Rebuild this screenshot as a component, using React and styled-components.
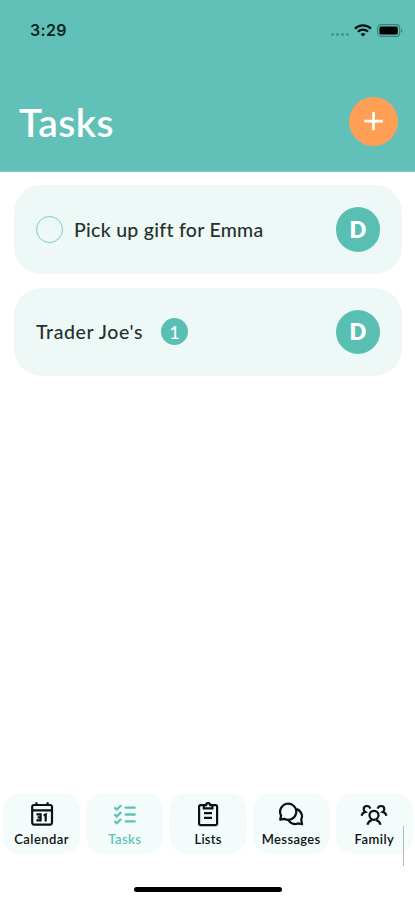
import styled, { createGlobalStyle } from "styled-components";

const tasks = [
  { id: 1, title: "Pick up gift for Emma", owner: "D", checkable: true },
  { id: 2, title: "Trader Joe's", owner: "D", count: 1 },
];

const CalendarIcon = () => (
  <svg width="26" height="26" viewBox="0 0 26 26" fill="none" stroke="currentColor" strokeWidth="2.2">
    <rect x="3.2" y="4" width="19.8" height="19.6" rx="2" />
    <path d="M3.2 9.4h19.8M7.4 1.2V5M18.6 1.2V5" />
    <path d="M7.4 13.4h4.2v6H7.4M8.6 16.4h3M14.6 14.4l2.1-1v7" />
  </svg>
);

const TasksIcon = () => (
  <svg width="26" height="26" viewBox="0 0 26 26" fill="none" stroke="currentColor" strokeWidth="2.3">
    <path d="M2.4 6.4l2.4 2.1 4.4-4.3M2.4 13.3l2.4 2.1 4.4-4.3M2.4 20.2l2.4 2.1 4.4-4.3" />
    <path d="M12.8 6.6h10.8M12.8 13.5h10.8M12.8 20.4h10.8" />
  </svg>
);

const ListsIcon = () => (
  <svg width="26" height="26" viewBox="0 0 26 26" fill="none" stroke="currentColor" strokeWidth="2.2">
    <path d="M8.5 4.2H5.6a1.5 1.5 0 0 0-1.5 1.5v17a1.5 1.5 0 0 0 1.5 1.5h15a1.5 1.5 0 0 0 1.5-1.5v-17a1.5 1.5 0 0 0-1.5-1.5h-2.9" />
    <path d="M8.8 4.2h2.3a2 2 0 0 1 4 0h2.3v3.2H8.8z" />
    <path d="M9 12.2h8M9 16.8h8" />
  </svg>
);

const MessagesIcon = () => (
  <svg width="26" height="26" viewBox="0 0 26 26" fill="none" stroke="currentColor" strokeWidth="2.2" strokeLinejoin="round">
    <path d="M2.2 18.6l.9-4A8.1 8.1 0 1 1 6.3 17.8z" />
    <path d="M18.2 8.2a7.3 7.3 0 0 1 5 10.4l.9 4.6-4.3-.8a7.3 7.3 0 0 1-9.6-3.8" />
  </svg>
);

const FamilyIcon = () => (
  <svg width="28" height="26" viewBox="0 0 28 26" fill="none" stroke="currentColor" strokeWidth="2.2">
    <circle cx="14" cy="14.3" r="4.5" />
    <path d="M7.4 23.8c.8-2.7 2.4-4.2 4.5-4.7M20.6 23.8c-.8-2.7-2.4-4.2-4.5-4.7" />
    <path d="M10.4 7.6C9.8 5.8 8.4 5 6.9 5 4.9 5 3.7 6.5 3.7 8.2c0 1.2.6 2.1 1.6 2.8-2 .4-3.3 1.7-3.7 3.7" />
    <path d="M17.6 7.6c.6-1.8 2-2.6 3.5-2.6 2 0 3.2 1.5 3.2 3.2 0 1.2-.6 2.1-1.6 2.8 2 .4 3.3 1.7 3.7 3.7" />
  </svg>
);

const tabs = [
  { label: "Calendar", icon: CalendarIcon, spacing: "0.45px" },
  { label: "Tasks", icon: TasksIcon, active: true, spacing: "0.4px" },
  { label: "Lists", icon: ListsIcon, spacing: "0.2px" },
  { label: "Messages", icon: MessagesIcon, spacing: "0.35px" },
  { label: "Family", icon: FamilyIcon, spacing: "0.5px" },
];

const App = () => {
  return (
    <Screen>
      <GlobalStyle />
      <Header>
        <StatusBar>
          <Time>3:29</Time>
          <StatusIcons>
            <Signal>
              <i />
              <i />
              <i />
              <i />
            </Signal>
            <svg width="18" height="13" viewBox="0 0 18 13" fill="none" stroke="#071513" strokeWidth="2.3">
              <path d="M1 4.6a11.4 11.4 0 0 1 16 0M4 7.8a7 7 0 0 1 10 0" />
              <path d="M9 12.6L6.6 10.2a3.5 3.5 0 0 1 4.8 0z" fill="#071513" stroke="none" />
            </svg>
            <svg width="26" height="13" viewBox="0 0 26 13">
              <rect x="0.6" y="0.6" width="22" height="11.8" rx="3.4" fill="none" stroke="#3c827b" strokeWidth="1.1" />
              <rect x="2.4" y="2.4" width="18.4" height="8.2" rx="1.5" fill="#000" />
              <path d="M24 4.4c1.8.5 1.8 3.7 0 4.2z" fill="#3c827b" />
            </svg>
          </StatusIcons>
        </StatusBar>
        <TitleRow>
          <Title>Tasks</Title>
          <AddButton aria-label="Add task">
            <svg width="20" height="20" viewBox="0 0 20 20" stroke="#fff" strokeWidth="2.6">
              <path d="M9.5 0.9v18.4M0.3 10.1h18.4" />
            </svg>
          </AddButton>
        </TitleRow>
      </Header>

      <TaskList>
        {tasks.map((task) => (
          <TaskCard key={task.id}>
            {task.checkable && <Checkbox />}
            <TaskName $spacing={task.checkable ? "0.28px" : "0.6px"}>{task.title}</TaskName>
            {task.count && <Count>{task.count}</Count>}
            <Avatar>{task.owner}</Avatar>
          </TaskCard>
        ))}
      </TaskList>

      <TabBar>
        {tabs.map(({ label, icon: Icon, active, spacing }) => (
          <Tab key={label} $active={active}>
            <Icon />
            <TabLabel $spacing={spacing}>{label}</TabLabel>
          </Tab>
        ))}
        <ScrollThumb />
      </TabBar>
      <HomeIndicator />
    </Screen>
  );
};

const GlobalStyle = createGlobalStyle`
  * {
    box-sizing: border-box;
  }
  body {
    margin: 0;
    background-color: white;
    font-family: Lato, sans-serif;
  }
`;

const Screen = styled.div`
  display: flex;
  flex-direction: column;
  width: 415px;
  height: 900px;
  overflow: hidden;
  background-color: white;
`;

const Header = styled.header`
  height: 172px;
  background-color: #61c1b8;
  border-bottom: 1px solid #82cec6;
`;

const StatusBar = styled.div`
  display: flex;
  align-items: center;
  justify-content: space-between;
  height: 60px;
  padding: 0 12px 0 30px;
`;

const Time = styled.span`
  font-family: Inter, sans-serif;
  font-size: 16px;
  font-weight: 600;
  letter-spacing: 0.3px;
  color: #0b2522;
`;

const StatusIcons = styled.div`
  display: flex;
  align-items: center;
  gap: 5px;
`;

const Signal = styled.div`
  display: flex;
  gap: 2px;
  padding-top: 8px;
  i {
    width: 3px;
    height: 3px;
    border-radius: 50%;
    background-color: #43928a;
  }
`;

const TitleRow = styled.div`
  display: flex;
  align-items: center;
  justify-content: space-between;
  height: 124px;
  margin-top: -1px;
  padding: 0 17px 0 19px;
`;

const Title = styled.h1`
  margin: 0;
  padding-top: 1px;
  font-size: 39px;
  font-weight: 600;
  line-height: 48px;
  letter-spacing: 0.4px;
  color: white;
`;

const AddButton = styled.button`
  display: flex;
  align-items: center;
  justify-content: center;
  width: 49px;
  height: 49px;
  padding: 0;
  border: none;
  border-radius: 50%;
  background-color: #fe9f55;
`;

const TaskList = styled.main`
  display: flex;
  flex: 1;
  flex-direction: column;
  gap: 14px;
  padding: 13px 13px 0 14px;
`;

const TaskCard = styled.div`
  display: flex;
  align-items: center;
  height: 88.5px;
  padding: 0 22px;
  border-radius: 27px;
  background-color: #eef9f7;
`;

const Checkbox = styled.span`
  width: 27px;
  height: 27px;
  margin-right: 11px;
  border: 1.5px solid #79cdc1;
  border-radius: 50%;
`;

const TaskName = styled.span`
  font-size: 19.5px;
  font-weight: 500;
  letter-spacing: ${({ $spacing }) => $spacing};
  white-space: nowrap;
  color: #26312f;
`;

const Count = styled.span`
  display: flex;
  align-items: center;
  justify-content: center;
  width: 27px;
  height: 27px;
  margin-left: 18px;
  border-radius: 50%;
  font-size: 18px;
  font-weight: 500;
  color: white;
  background-color: #5abfb3;
`;

const Avatar = styled.span`
  display: flex;
  align-items: center;
  justify-content: center;
  width: 44.5px;
  height: 44.5px;
  margin-left: auto;
  border-radius: 50%;
  font-size: 22px;
  font-weight: 800;
  color: white;
  background-color: #5abfb3;
`;

const TabBar = styled.nav`
  position: relative;
  display: flex;
  gap: 6px;
  height: 61px;
  padding: 0 2px 0 3px;
`;

const Tab = styled.div`
  display: flex;
  flex: 1;
  flex-direction: column;
  align-items: center;
  padding-top: 8px;
  border-radius: 18px;
  background-color: #f3fcfb;
  color: ${({ $active }) => ($active ? "#5fc2b5" : "#0b1211")};
`;

const TabLabel = styled.span`
  margin-top: 4px;
  font-size: 13px;
  font-weight: 600;
  line-height: 16px;
  letter-spacing: ${({ $spacing }) => $spacing};
`;

const ScrollThumb = styled.div`
  position: absolute;
  top: 33px;
  right: 11px;
  width: 1px;
  height: 40px;
  background-color: #b3b8b8;
`;

const HomeIndicator = styled.div`
  width: 148px;
  height: 5px;
  margin: 33px auto 8px;
  border-radius: 3px;
  background-color: black;
`;

export default App;
